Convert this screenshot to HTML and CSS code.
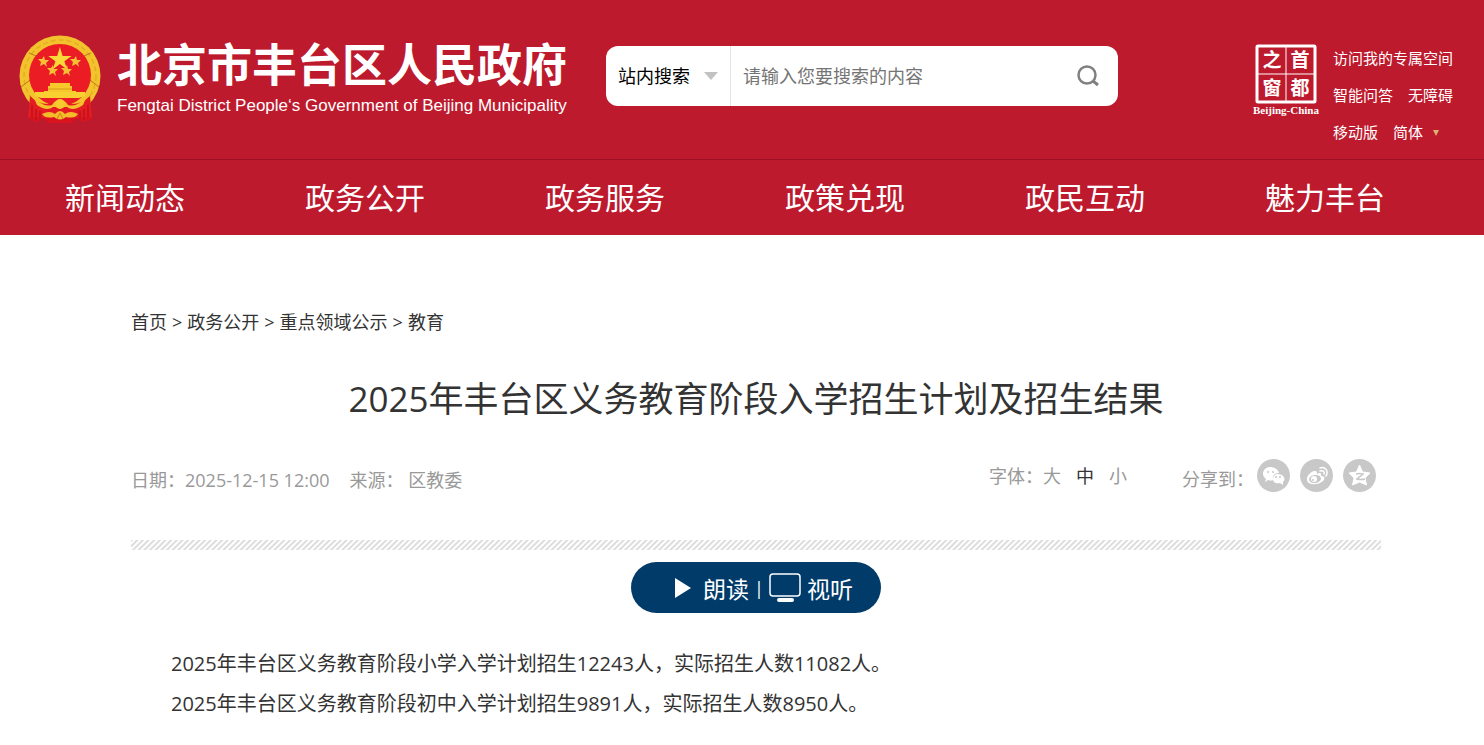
FILE: index.html
```html
<!DOCTYPE html>
<html lang="zh-CN">
<head>
    <meta charset="UTF-8">
    <meta name="viewport" content="width=device-width, initial-scale=1.0">
    <title>2025年丰台区义务教育阶段入学招生计划及招生结果</title>
    <link rel="stylesheet" href="styles.css">
</head>
<body>
    <header class="header">
        <div class="header-top">
            <a class="brand" href="#">
                <svg class="emblem" viewBox="0 0 82 90" aria-hidden="true">
                    <path d="M11 64 H71 L73 84 L65 87 L57 83 L53 88 L29 88 L25 83 L17 87 L9 83 Z" fill="#d9141f"/>
                    <circle cx="41" cy="41" r="40.500" fill="#f2c32c"/>
                    <circle cx="41" cy="41" r="36" fill="none" stroke="#e5ae22" stroke-width="1.500" stroke-dasharray="5 3"/>
                    <path d="M2 52 L11 45 M80 52 L71 45 M10 18 L17 21 M72 18 L65 21" stroke="#b9781a" stroke-width="1"/>
                    <circle cx="41" cy="40" r="31" fill="#ec1c24"/>
                    <path d="M41 11 L44 21 L54 21 L46 27 L49 36 L41 30 L33 36 L36 27 L28 21 L38 21 Z" transform="translate(4 2) scale(.9)" fill="#fbd83a"/>
                    <g fill="#f6bf35">
                        <path id="star" d="M25 21 L26 25 L30 25 L27 28 L28 32 L25 29 L21 31 L22 27 L19 24 L23 24 Z"/>
                        <use href="#star" x="32"/>
                        <use href="#star" x="9" y="9"/>
                        <use href="#star" x="23" y="9"/>
                    </g>
                    <path d="M31 48 H51 V51 H53 V56 H57 V60 H25 V56 H29 V51 H31 Z" fill="#f7c82c"/>
                    <path d="M29 54 H53" stroke="#d79b1d" stroke-width="1"/>
                    <path d="M11 61 Q24 74 41 66 Q58 74 71 61 L73 82 Q56 84 41 82 Q26 84 9 82 Z" fill="#e51b22"/>
                    <path d="M16 57 H66 V61 L60 63 H22 L16 61 Z" fill="#f9d032"/>
                    <path d="M14 61 Q24 73 33 70 Q36 65 41 65 Q46 65 49 70 Q58 73 68 61 L64 70 Q54 77 48 72 H34 Q28 77 18 70 Z" fill="#f5c12b"/>
                    <circle cx="41" cy="69" r="5" fill="#f7cb30"/>
                    <path d="M23 79 Q31 75 36 79 Q41 73 46 79 Q51 75 59 79 Q56 84 47 82 Q41 87 35 82 Q26 84 23 79 Z" fill="#f2bd29"/>
                    <path d="M38 84 L41 78 L44 84" fill="none" stroke="#d9801c" stroke-width="1"/>
                    <path d="M13 70 V83 M17 74 V85 M21 76 V84 M61 76 V84 M65 74 V85 M69 70 V83" stroke="#a9101a" stroke-width="1"/>
                </svg>
                <span class="brand-text">
                    <span class="brand-cn">北京市丰台区人民政府</span>
                    <span class="brand-en">Fengtai District People‘s Government of Beijing Municipality</span>
                </span>
            </a>

            <form class="search">
                <label class="search-scope">
                    <select aria-label="搜索范围">
                        <option>站内搜索</option>
                    </select>
                    <svg viewBox="0 0 14 8" aria-hidden="true"><path d="M0 0 H14 L7 8 Z" fill="#c2c2c2"/></svg>
                </label>
                <input class="search-input" type="text" placeholder="请输入您要搜索的内容" aria-label="搜索内容">
                <button class="search-button" type="submit" aria-label="搜索">
                    <svg viewBox="0 0 24 24" fill="none" stroke="#808080" aria-hidden="true">
                        <circle cx="11" cy="11" r="8.500" stroke-width="2.500"/>
                        <path d="M17 17 L22 21" stroke-width="3"/>
                    </svg>
                </button>
            </form>

            <div class="tools">
                <a class="capital" href="#">
                    <svg viewBox="0 0 62 60" aria-label="首都之窗">
                        <rect x="2" y="2" width="58" height="56" rx="1" fill="none" stroke="#fff" stroke-width="3"/>
                        <path d="M31 2 V58 M2 30 H60" stroke="#fff" stroke-width="1"/>
                        <g class="capital-text">
                            <text x="17" y="23">之</text>
                            <text x="45" y="23">首</text>
                            <text x="17" y="51">窗</text>
                            <text x="45" y="51">都</text>
                        </g>
                    </svg>
                    <span>Beijing-China</span>
                </a>
                <ul class="tool-links">
                    <li><a href="#">访问我的专属空间</a></li>
                    <li><a href="#">智能问答</a><a href="#">无障碍</a></li>
                    <li>
                        <a href="#">移动版</a>
                        <a class="language" href="#">简体<svg viewBox="0 0 6 6" aria-hidden="true"><path d="M0 0 H6 L3 6 Z" fill="#dcb173"/></svg></a>
                    </li>
                </ul>
            </div>
        </div>

        <nav class="nav">
            <a href="#">新闻动态</a>
            <a href="#">政务公开</a>
            <a href="#">政务服务</a>
            <a href="#">政策兑现</a>
            <a href="#">政民互动</a>
            <a href="#">魅力丰台</a>
        </nav>
    </header>

    <main class="container">
        <div class="breadcrumb">
            <a href="#">首页</a>
            <span>&gt;</span>
            <a href="#">政务公开</a>
            <span>&gt;</span>
            <a href="#">重点领域公示</a>
            <span>&gt;</span>
            <a href="#">教育</a>
        </div>

        <h1>2025年丰台区义务教育阶段入学招生计划及招生结果</h1>

        <div class="meta">
            <div class="source">
                <span>日期：2025-12-15 12:00</span>
                <span>来源： 区教委</span>
            </div>
            <div class="font-size">
                <span>字体：</span>
                <button type="button">大</button>
                <button type="button" class="active">中</button>
                <button type="button">小</button>
            </div>
            <div class="share">
                <span>分享到：</span>
                <a href="#" aria-label="微信">
                    <svg viewBox="0 0 33 33">
                        <circle cx="16.500" cy="16.500" r="16.500" fill="#c8c8c8"/>
                        <path d="M13 8 C9 8 6 11 6 15 C6 17 7 18 9 20 L8 23 L11 21 Q14 22 16 21 C15 16 18 14 22 14 C21 10 17 8 13 8 Z" fill="#fff"/>
                        <path d="M21 15 C18 15 16 17 16 20 C16 24 20 25 23 24 L26 26 L26 23 C28 21 28 19 26 17 C25 16 23 15 21 15 Z" fill="#fff"/>
                        <g fill="#c8c8c8"><circle cx="11" cy="13" r="1"/><circle cx="16" cy="13" r="1"/><circle cx="19" cy="18" r="1"/><circle cx="23" cy="18" r="1"/></g>
                    </svg>
                </a>
                <a href="#" aria-label="微博">
                    <svg viewBox="0 0 33 33">
                        <circle cx="16.500" cy="16.500" r="16.500" fill="#c8c8c8"/>
                        <path d="M15 12 C12 11 6 17 7 21 C8 27 19 26 23 22 C26 19 24 17 21 17 C22 14 20 13 17 15 C17 13 17 12 15 12 Z" fill="#fff"/>
                        <ellipse cx="15" cy="20" rx="6" ry="4" fill="#c8c8c8" transform="rotate(-8 15 20)"/>
                        <circle cx="14" cy="20" r="3" fill="#fff"/>
                        <circle cx="13" cy="21" r="1" fill="#c8c8c8"/>
                        <path d="M20 9 C25 7 29 12 26 17 M20 12 C23 11 25 13 24 15" fill="none" stroke="#fff" stroke-width="1.500" stroke-linecap="round"/>
                    </svg>
                </a>
                <a href="#" aria-label="QQ空间">
                    <svg viewBox="0 0 33 33">
                        <circle cx="16.500" cy="16.500" r="16.500" fill="#c8c8c8"/>
                        <path d="M16.500 6 L19.500 13 L27 14 L22 19 L23.500 26 L16.500 23 L9.500 26 L11 19 L6 14 L13.500 13 Z" fill="#fff" stroke="#fff" stroke-linejoin="round"/>
                        <path d="M13 15 Q17 14 20 15 L14 20 Q18 21 22 20" fill="none" stroke="#c8c8c8" stroke-width="1.500"/>
                    </svg>
                </a>
            </div>
        </div>

        <div class="divider"></div>

        <div class="player">
            <button type="button">
                <svg class="icon-play" viewBox="0 0 16 20" aria-hidden="true"><path d="M0 0 L16 10 L0 20 Z" fill="#fff"/></svg>
                朗读
            </button>
            <span class="player-line">|</span>
            <button type="button">
                <svg class="icon-screen" viewBox="0 0 32 30" aria-hidden="true">
                    <rect x="1" y="1" width="30" height="22" rx="3" fill="none" stroke="#fff" stroke-width="1.500"/>
                    <rect x="8" y="25" width="17" height="4" rx="2" fill="#fff"/>
                </svg>
                视听
            </button>
        </div>

        <article class="content">
            <p>2025年丰台区义务教育阶段小学入学计划招生12243人，实际招生人数11082人。</p>
            <p>2025年丰台区义务教育阶段初中入学计划招生9891人，实际招生人数8950人。</p>
        </article>
    </main>
</body>
</html>
```
FILE: styles.css
```css
* {
    box-sizing: border-box;
}
body {
    margin: 0;
    font-family: "Open Sans", "Noto Sans CJK SC", sans-serif;
    font-size: 18px;
    color: #333;
    background-color: #fff;
}
a {
    color: inherit;
    text-decoration: none;
}
button, input, select {
    font: inherit;
    color: inherit;
    border: none;
    padding: 0;
    background: none;
}
button {
    cursor: pointer;
}
svg {
    display: block;
    flex: none;
}

/* header */
.header {
    background-color: #bd1a2d;
    color: #fff;
}
.header-top {
    display: flex;
    align-items: center;
    min-height: 160px;
    padding: 0 31px 0 19px;
    border-bottom: 1px solid #9b1022;
}
.brand {
    display: flex;
    align-items: center;
    gap: 16px;
    margin-right: 39px;
}
.emblem {
    width: 82px;
    height: 90px;
}
.brand-text {
    display: flex;
    flex-direction: column;
    padding-bottom: 2px;
    white-space: nowrap;
}
.brand-cn {
    font-size: 45px;
    font-weight: bold;
    line-height: 54px;
}
.brand-en {
    font-family: "Liberation Sans", Arial, sans-serif;
    font-size: 17px;
    line-height: 28px;
}
.search {
    display: flex;
    align-items: center;
    flex: 0 1 512px;
    height: 60px;
    margin-bottom: 8px;
    border-radius: 12px;
    background-color: #fff;
    color: #000;
}
.search-scope {
    display: flex;
    align-items: center;
    justify-content: space-between;
    flex: none;
    width: 125px;
    height: 60px;
    padding: 0 12px;
    border-right: 1px solid #e4e4e4;
}
.search-scope select {
    appearance: none;
    outline: none;
}
.search-scope svg {
    width: 14px;
    height: 8px;
}
.search-input {
    flex: 1;
    min-width: 0;
    height: 60px;
    padding: 0 12px;
    outline: none;
}
.search-input::placeholder {
    color: #757575;
}
.search-button {
    margin-right: 18px;
}
.search-button svg {
    width: 24px;
    height: 24px;
}
.tools {
    display: flex;
    align-items: center;
    gap: 14px;
    margin-left: auto;
}
.capital {
    display: flex;
    flex-direction: column;
    align-items: center;
    font-family: "Liberation Serif", "Times New Roman", serif;
    font-size: 11px;
    font-weight: bold;
    line-height: 12px;
}
.capital svg {
    width: 62px;
    height: 60px;
}
.capital-text {
    fill: #fff;
    font-family: "Noto Sans CJK SC", sans-serif;
    font-size: 19px;
    font-weight: bold;
    text-anchor: middle;
}
.tool-links {
    margin: 32px 0 0;
    padding: 0;
    list-style: none;
    font-size: 15px;
    line-height: 37px;
    white-space: nowrap;
}
.tool-links li {
    display: flex;
    gap: 15px;
}
.language {
    display: flex;
    align-items: center;
    gap: 10px;
}
.language svg {
    width: 6px;
    height: 6px;
}

/* navigation */
.nav {
    display: grid;
    grid-template-columns: repeat(6, 1fr);
    padding: 0 39px 0 5px;
    font-size: 30px;
    line-height: 75px;
    text-align: center;
}

/* article */
.container {
    padding: 72px 103px 20px 131px;
}
.breadcrumb {
    display: flex;
    gap: 5px;
    line-height: 30px;
}
h1 {
    margin: 36px 0 34px;
    font-size: 35px;
    font-weight: normal;
    line-height: 52px;
    text-align: center;
}
.meta {
    display: flex;
    align-items: center;
    height: 40px;
    color: #999;
}
.source {
    display: flex;
    gap: 20px;
    margin-right: auto;
}
.font-size {
    display: flex;
    gap: 15px;
    margin-right: 55px;
    padding-bottom: 8px;
}
.font-size span {
    margin-right: -15px;
}
.font-size .active {
    color: #333;
}
.share {
    display: flex;
    align-items: center;
    gap: 10px;
    margin-right: 5px;
    padding-bottom: 8px;
}
.share span {
    margin-right: -7px;
    padding-top: 6px;
}
.share svg {
    width: 33px;
    height: 33px;
}
.divider {
    height: 10px;
    margin: 41px 0 12px;
    background: repeating-linear-gradient(135deg, #ddd 0 1px, #fff 2px 3px, #ddd 4px);
}
.player {
    display: flex;
    align-items: center;
    justify-content: center;
    gap: 5px;
    width: 250px;
    height: 51px;
    margin: 0 auto;
    padding-left: 16px;
    border-radius: 26px;
    background-color: #003b69;
    color: #fff;
    font-size: 23px;
}
.player button {
    display: flex;
    align-items: center;
    gap: 6px;
}
.player-line {
    font-size: 18px;
}
.icon-play {
    width: 16px;
    height: 20px;
    margin-right: 6px;
}
.icon-screen {
    width: 32px;
    height: 30px;
}
.content {
    margin-top: 31px;
    padding: 0 40px;
    font-size: 20px;
    line-height: 40px;
}
.content p {
    margin: 0;
}
```
